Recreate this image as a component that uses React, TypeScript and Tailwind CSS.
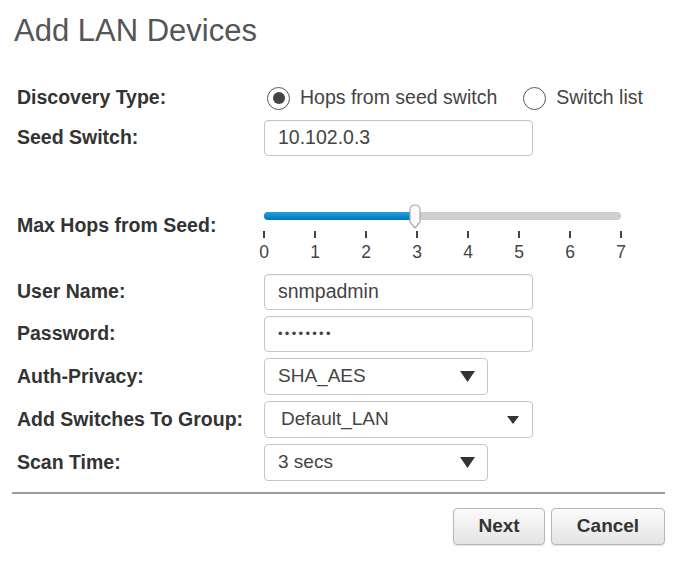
import React from "react";

const font = { fontFamily: '"Liberation Sans", Arial, sans-serif' };

const Label: React.FC<{ text: string; extra?: string }> = ({ text, extra }) => (
  <div
    className={
      "w-[247px] shrink-0 text-[19.5px] font-bold text-[#333] leading-none " + (extra || "")
    }
  >
    {text}
  </div>
);

const TextBox: React.FC<{ value: string; dots?: boolean }> = ({ value, dots }) => (
  <div className="flex h-[36px] w-[269px] items-center rounded-[4px] border border-[#c6c6c6] bg-white pl-[13px] shadow-[inset_0_1px_1px_rgba(0,0,0,0.04)]">
    {dots ? (
      <span className="text-[13px] tracking-[2.3px] text-[#444]">{value}</span>
    ) : (
      <span className="text-[19.5px] text-[#444]">{value}</span>
    )}
  </div>
);

const Select: React.FC<{ value: string; wide?: boolean }> = ({ value, wide }) => (
  <div
    className={
      wide
        ? "flex h-[37px] w-[269px] items-center justify-between rounded-[4px] border border-[#c6c6c6] bg-white pl-[16px] pr-[13px]"
        : "flex h-[37px] w-[224px] items-center justify-between rounded-[4px] border border-[#c6c6c6] bg-white pl-[13px] pr-[12px]"
    }
  >
    <span className="text-[19px] text-[#444]">{value}</span>
    {wide ? (
      <svg width="12" height="8" viewBox="0 0 12 8">
        <path d="M0 0 L12 0 L6 8 Z" fill="#333" />
      </svg>
    ) : (
      <svg width="15" height="11" viewBox="0 0 15 11">
        <path d="M0 0 L15 0 L7.5 11 Z" fill="#333" />
      </svg>
    )}
  </div>
);

const Radio: React.FC<{ checked?: boolean; label: string }> = ({ checked, label }) => (
  <div className="flex items-center">
    <span className="flex h-[23px] w-[23px] items-center justify-center rounded-full border-[1.5px] border-[#555] bg-white">
      {checked && <span className="h-[12px] w-[12px] rounded-full bg-[#444]" />}
    </span>
    <span className="ml-[10px] text-[19.5px] text-[#444] leading-none">{label}</span>
  </div>
);

const Slider: React.FC = () => {
  const ticks = [0, 1, 2, 3, 4, 5, 6, 7];
  return (
    <div className="relative h-[62px] w-[357px] pt-[13px]">
      <div className="relative h-[8px] w-full rounded-full bg-[#cfcfcf]">
        <div className="absolute left-0 top-0 h-[8px] w-[150px] rounded-full bg-gradient-to-b from-[#1ea2e0] to-[#0574b6]" />
      </div>
      <svg
        className="absolute left-[144px] top-[5px]"
        width="14"
        height="26"
        viewBox="0 0 14 26"
      >
        <path
          d="M2 6 Q2 1 7 1 Q12 1 12 6 L12 18 L7 24 L2 18 Z"
          fill="#fafafa"
          stroke="#a9a9a9"
          strokeWidth="1.2"
        />
      </svg>
      <div className="mt-[11px] flex justify-between">
        {ticks.map((t) => (
          <div key={t} className="flex w-0 flex-col items-center">
            <div className="h-[7px] w-[1.5px] shrink-0 bg-[#444]" />
            <div className="mt-[6px] text-[17.5px] leading-none text-[#444]">{t}</div>
          </div>
        ))}
      </div>
    </div>
  );
};

const Button: React.FC<{ text: string; w: string }> = ({ text, w }) => (
  <div
    className={
      "flex h-[37px] items-center justify-center rounded-[4px] border border-[#b8b8b8] bg-gradient-to-b from-[#fbfbfb] to-[#e4e4e4] shadow-[0_1px_1px_rgba(0,0,0,0.12)] " +
      w
    }
  >
    <span className="text-[19px] font-bold text-[#333]">{text}</span>
  </div>
);

export default function App() {
  return (
    <div className="h-[569px] w-[674px] bg-white" style={font}>
      <div className="pl-[14px] pt-[13px]">
        <h1 className="h-[36px] text-[31px] leading-[36px] text-[#555]">Add LAN Devices</h1>
      </div>

      <div className="mt-[31px] flex h-[36px] items-center pl-[17px]">
        <Label text="Discovery Type:" />
        <div className="flex items-center gap-[26px] pl-[3px]">
          <Radio checked label="Hops from seed switch" />
          <Radio label="Switch list" />
        </div>
      </div>

      <div className="mt-[3px] flex h-[37px] items-center pl-[17px]">
        <Label text="Seed Switch:" />
        <TextBox value="10.102.0.3" />
      </div>

      <div className="mt-[43px] flex items-start pl-[17px]">
        <Label text="Max Hops from Seed:" extra="mt-[17px]" />
        <Slider />
      </div>

      <div className="mt-[13px] flex flex-col gap-[6px] pl-[17px]">
        <div className="flex items-center">
          <Label text="User Name:" />
          <TextBox value="snmpadmin" />
        </div>
        <div className="flex items-center">
          <Label text="Password:" />
          <TextBox value="••••••••" dots />
        </div>
        <div className="flex items-center">
          <Label text="Auth-Privacy:" />
          <Select value="SHA_AES" />
        </div>
        <div className="flex items-center">
          <Label text="Add Switches To Group:" />
          <Select value="Default_LAN" wide />
        </div>
        <div className="flex items-center">
          <Label text="Scan Time:" />
          <Select value="3 secs" />
        </div>
      </div>

      <div className="mx-[12px] mt-[11px] w-[653px] border-t-2 border-[#9c9c9c]" />

      <div className="mt-[14px] flex justify-end gap-[6px] pr-[9px]">
        <Button text="Next" w="w-[92px]" />
        <Button text="Cancel" w="w-[114px]" />
      </div>
    </div>
  );
}
